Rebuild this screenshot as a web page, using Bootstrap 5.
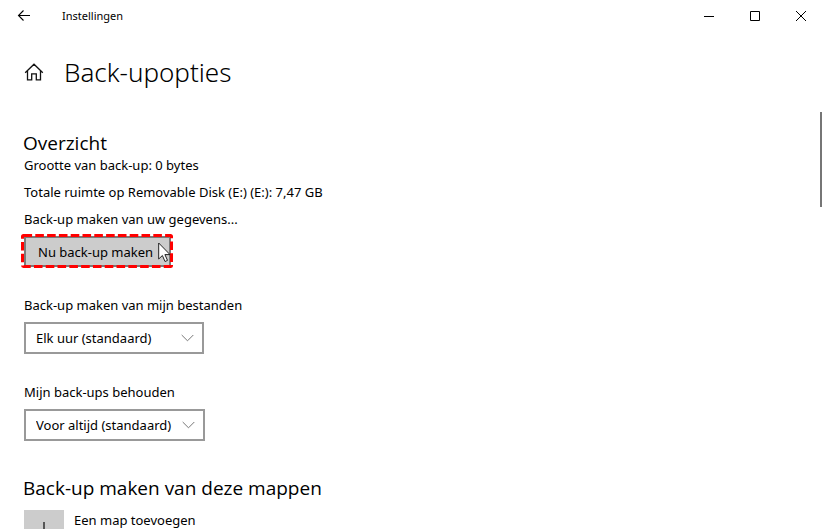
<!DOCTYPE html>
<html lang="nl">
<head>
<meta charset="utf-8">
<meta name="viewport" content="width=device-width, initial-scale=1">
<title>Instellingen</title>
<link href="https://cdn.jsdelivr.net/npm/bootstrap@5.3.0/dist/css/bootstrap.min.css" rel="stylesheet">
<style>
  body { font-family: "Noto Sans", "Open Sans", sans-serif; font-size: 13px; line-height: 20px; color: #000; background: #fff; }
  svg { display: block; }
  .titlebar { height: 32px; font-size: 11px; }
  .titlebar button { width: 46px; height: 32px; }
  .titlebar .back { width: 48px; }
  .titlebar .name { padding-left: 14px; }
  .plain { border: 0; padding: 0; background: none; color: #000; }
  .page-head { padding: 20px 24px 0; gap: 20px; height: 60px; }
  .page-head h1 { font-size: 26px; line-height: 40px; font-weight: 300; margin: 0; }
  .content { padding: 39px 24px 0; }
  .content h2 { font-family: "Open Sans", "Noto Sans", sans-serif; font-size: 19px; line-height: 24px; font-weight: 400; margin: 0 0 0 -1px; }
  .content p { margin: 0 0 7px; }
  .run { width: 147px; height: 31px; border: 2px solid #7a7a7a; background: #ccc; color: #000; padding: 0 12px; text-align: left; white-space: nowrap; }
  .marker { position: absolute; left: -3px; top: -2px; width: calc(100% + 5px); height: calc(100% + 3px); overflow: visible; pointer-events: none; }
  .pointer { position: absolute; left: 134px; top: 6px; pointer-events: none; }
  .group { margin-top: 28px; }
  .group label { margin-bottom: 7px; }
  .combo { height: 32px; width: 180px; border: 2px solid #999; border-radius: 0; padding: 0 28px 0 10px; font-size: 13px; line-height: 20px; color: #000;
    background-color: #fff; background-position: right 8px center; background-size: 13px 8px;
    background-image: url("data:image/svg+xml,%3Csvg xmlns='http://www.w3.org/2000/svg' viewBox='0 0 13 8'%3E%3Cpath d='M.7 1 6.5 6.8 12.3 1' fill='none' stroke='%23777'/%3E%3C/svg%3E"); }
  .combo-wide { width: 181px; }
  .folders { margin-top: 35px; }
  .add { margin-top: 10px; gap: 10px; }
  .add .tile { width: 40px; height: 40px; background: #ccc; }
  .thumb { position: absolute; right: 2px; top: 112px; width: 2px; height: 95px; background: #767676; }
</style>
<script src="https://cdn.jsdelivr.net/npm/bootstrap@5.3.0/dist/js/bootstrap.bundle.min.js"></script>
</head>
<body>
<div class="vh-100 overflow-hidden position-relative">
  <header class="titlebar d-flex align-items-center">
    <button class="plain back d-flex align-items-center justify-content-center" type="button" aria-label="Terug">
      <svg width="14" height="12" viewBox="0 0 14 12" fill="none" stroke="#000" stroke-width="1.1"><path d="M13 5.5H1.5M6.5.5l-5 5 5 5"/></svg>
    </button>
    <span class="name flex-grow-1">Instellingen</span>
    <button class="plain d-flex align-items-center justify-content-center" type="button" aria-label="Minimaliseren">
      <svg width="10" height="10" viewBox="0 0 10 10"><path d="M0 5h10v1H0z"/></svg>
    </button>
    <button class="plain d-flex align-items-center justify-content-center" type="button" aria-label="Maximaliseren">
      <svg width="10" height="10" viewBox="0 0 10 10" fill="none" stroke="#000"><path d="M.5.5h9v9h-9z"/></svg>
    </button>
    <button class="plain d-flex align-items-center justify-content-center" type="button" aria-label="Sluiten">
      <svg width="10" height="10" viewBox="0 0 10 10" fill="none" stroke="#000"><path d="M0 0l10 10M10 0 0 10"/></svg>
    </button>
  </header>

  <div class="page-head d-flex align-items-center">
    <button class="plain" type="button" aria-label="Startpagina">
      <svg width="20" height="18" viewBox="0 0 20 18" fill="none" stroke="#111" stroke-width="1.3"><path d="M1.2 9.7 10 1.2l8.8 8.5M3.5 7.6v9.2h4.2v-6h4.6v6h4.2V7.6"/></svg>
    </button>
    <h1>Back-upopties</h1>
  </div>

  <main class="content">
    <section>
      <h2>Overzicht</h2>
      <p>Grootte van back-up: 0 bytes</p>
      <p>Totale ruimte op Removable Disk (E:) (E:): 7,47 GB</p>
      <p>Back-up maken van uw gegevens...</p>
      <div class="position-relative d-inline-block align-top">
        <button class="run d-block" type="button">Nu back-up maken</button>
        <svg class="marker" aria-hidden="true"><rect x="1.5" y="1.5" width="149" height="31" rx="1" fill="none" stroke="#f00" stroke-width="3" stroke-dasharray="8.6 3.2"/></svg>
        <svg class="pointer" width="13" height="21" viewBox="0 0 13 21" aria-hidden="true"><path d="M.7 1v16l3.7-3.5 2.6 6 2.5-1.1-2.6-5.8H12z" fill="#fff" stroke="#222"/></svg>
      </div>
    </section>

    <div class="group">
      <label class="d-block" for="frequency">Back-up maken van mijn bestanden</label>
      <select class="form-select combo" id="frequency"><option>Elk uur (standaard)</option></select>
    </div>
    <div class="group">
      <label class="d-block" for="keep">Mijn back-ups behouden</label>
      <select class="form-select combo combo-wide" id="keep"><option>Voor altijd (standaard)</option></select>
    </div>

    <section class="folders">
      <h2>Back-up maken van deze mappen</h2>
      <button class="plain add d-flex align-items-start" type="button">
        <span class="tile d-flex align-items-center justify-content-center">
          <svg width="16" height="16" viewBox="0 0 16 16" fill="none" stroke="#555" stroke-width="2"><path d="M8 0v16M0 8h16"/></svg>
        </span>
        <span>Een map toevoegen</span>
      </button>
    </section>
  </main>
  <div class="thumb" aria-hidden="true"></div>
</div>
</body>
</html>
